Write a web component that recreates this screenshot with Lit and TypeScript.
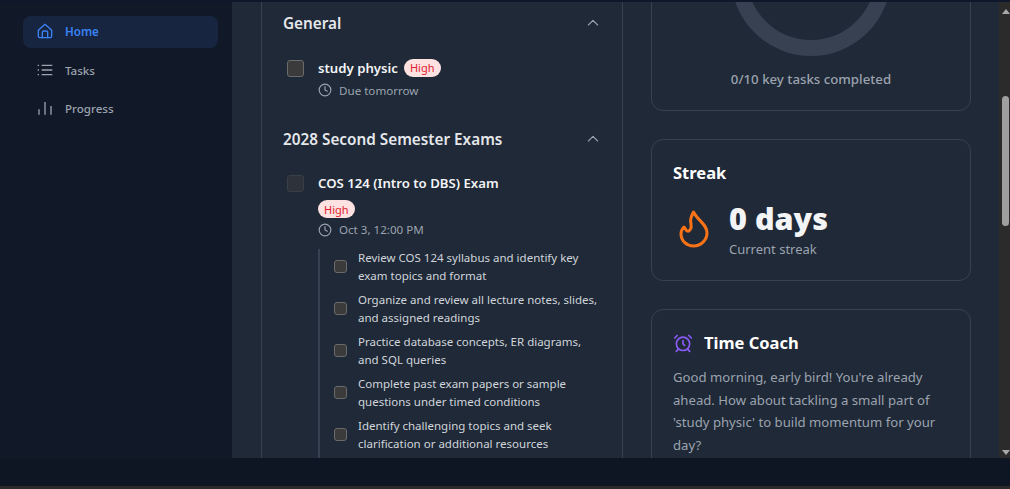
import { LitElement, html, css, svg } from "lit";
import { customElement } from "lit/decorators.js";

const clock = html`<svg class="clock" viewBox="0 0 24 24" fill="none" stroke="currentColor" stroke-width="2" stroke-linecap="round" stroke-linejoin="round"><circle cx="12" cy="12" r="10"/><path d="M12 6v6l4 2"/></svg>`;
const chevron = html`<svg class="chev" viewBox="0 0 24 24" fill="none" stroke="currentColor" stroke-width="1.6" stroke-linecap="round" stroke-linejoin="round"><path d="M5 15l7-7 7 7"/></svg>`;
const subtasks = [
  ["Review COS 124 syllabus and identify key", "exam topics and format"],
  ["Organize and review all lecture notes, slides,", "and assigned readings"],
  ["Practice database concepts, ER diagrams,", "and SQL queries"],
  ["Complete past exam papers or sample", "questions under timed conditions"],
  ["Identify challenging topics and seek", "clarification or additional resources"],
];

@customElement("app-root")
export class AppRoot extends LitElement {
  static styles = css`
    :host { display: flex; flex-direction: column; width: 1010px; height: 489px; overflow: hidden; background: #0f1623; font-family: "Noto Sans", "Open Sans", sans-serif; }
    * { box-sizing: border-box; }
    .topbar { height: 2px; background: #0f172a; flex: none; }
    .middle { display: flex; height: 456px; flex: none; }
    .footer { height: 28px; flex: none; background: #0f1623; }
    .rule { height: 3px; flex: none; background: #2b2b2b; }
    .sidebar { width: 232px; flex: none; background: #111827; padding: 14px 14px 0 23px; display: flex; flex-direction: column; gap: 6px; }
    .nav { height: 32px; display: flex; align-items: center; gap: 12px; padding-left: 14px; border-radius: 8px; font-size: 11.6px; font-weight: 500; color: #9ca3af; }
    .nav svg { width: 16px; height: 16px; flex: none; }
    .nav.active { background: #172540; color: #3b82f6; font-weight: 600; padding-bottom: 2px; }
    .main { width: 767px; flex: none; background: #1f2937; overflow: hidden; display: grid; grid-template-columns: 362px 320px; gap: 28px; padding-left: 29px; align-items: start; }
    .col { display: flex; flex-direction: column; }
    .tasks { height: 700px; margin-top: -20px; border: 1px solid #374151; padding: 28px 20px 0 21px; display: flex; flex-direction: column; }
    .group { display: flex; align-items: center; justify-content: space-between; height: 24px; color: #e5e7eb; font-size: 15.3px; font-weight: 600; padding-right: 1px; }
    .chev { width: 16px; height: 16px; color: #9ca3af; }
    .task { display: flex; gap: 14px; }
    .info { margin-top: -1px; }
    .check { width: 17px; height: 17px; flex: none; background: #3b3b3b; border: 1px solid #6b6b6b; border-radius: 3px; margin-left: 4px; }
    .check.dim { background: #2d323b; border-color: #3a3f47; }
    .title { display: flex; align-items: center; gap: 6px; color: #f3f4f6; font-size: 13.2px; font-weight: 600; line-height: 18px; }
    .badge { display: inline-flex; align-items: center; height: 18px; padding: 0 6px; border-radius: 9px; background: #fee2e2; color: #e11d2e; font-size: 11px; font-weight: 400; }
    .meta { display: flex; align-items: center; gap: 7px; color: #9ca3af; font-size: 11.6px; height: 18px; }
    .clock { width: 14px; height: 14px; }
    .first { margin-top: 25px; }
    .first .meta { margin-top: 4px; }
    .second-head { margin-top: 28px; }
    .second { margin-top: 24px; }
    .second .badge { margin-top: 8px; }
    .second .meta { margin-top: 2px; }
    .subs { margin: 10px 0 0 35px; border-left: 2px solid #374151; padding: 0 0 40px 14px; display: flex; flex-direction: column; gap: 6px; }
    .sub { display: flex; align-items: center; gap: 11px; color: #d1d5db; font-size: 11.5px; line-height: 18px; white-space: nowrap; }
    .sub .box { width: 13px; height: 13px; flex: none; background: #3b3b3b; border: 1px solid #6b6b6b; border-radius: 3px; }
    .card { border: 1px solid #374151; border-radius: 12px; padding: 21px; }
    .ringcard { margin-top: -40px; height: 149px; padding: 0; overflow: hidden; display: flex; flex-direction: column; align-items: center; }
    .ring { width: 160px; height: 160px; margin-top: -67px; flex: none; }
    .ringtext { margin-top: 14px; color: #9ca3af; font-size: 13.25px; font-weight: 500; }
    .streak { margin-top: 28px; height: 142px; }
    .h { color: #fff; font-size: 16.5px; font-weight: 700; line-height: 24px; }
    .streakrow { display: flex; align-items: center; gap: 19px; margin-top: 15px; }
    .flame { width: 32px; height: 40px; flex: none; margin-left: 5px; color: #f97316; }
    .days { color: #f3f4f6; font-size: 30.6px; font-weight: 900; line-height: 36px; }
    .sublabel { margin-top: 4px; color: #9ca3af; font-size: 13px; line-height: 18px; }
    .coach { margin-top: 28px; height: 300px; }
    .coachhead { display: flex; align-items: center; gap: 11px; }
    .alarm { width: 20px; height: 20px; color: #8b5cf6; }
    .coach p { margin: 11px 0 0; color: #9ca3af; font-size: 13.15px; line-height: 22.5px; }
    .scroll { width: 11px; flex: none; background: #2b2b2b; display: flex; flex-direction: column; align-items: center; position: relative; }
    .thumb { position: absolute; top: 94px; left: 3px; width: 7px; height: 130px; border-radius: 4px; background: #9f9f9f; }
    .arrow { position: absolute; left: 3px; width: 0; height: 0; border-left: 4px solid transparent; border-right: 4px solid transparent; }
    .up { top: 7px; border-bottom: 5px solid #a8a8a8; }
    .down { bottom: 3px; border-top: 5px solid #a8a8a8; }
  `;

  render() {
    return html`
      <div class="topbar"></div>
      <div class="middle">
        <aside class="sidebar">
          <div class="nav active">
            <svg viewBox="0 0 24 24" fill="none" stroke="currentColor" stroke-width="2" stroke-linejoin="round" stroke-linecap="round"><path d="M2 11 12 2l10 9v9a2 2 0 0 1-2 2H4a2 2 0 0 1-2-2z"/><path d="M8 22v-8a2 2 0 0 1 2-2h4a2 2 0 0 1 2 2v8"/></svg>
            Home
          </div>
          <div class="nav">
            <svg viewBox="0 0 24 24" fill="none" stroke="currentColor" stroke-width="2"><path d="M7 5h16M7 12h16M7 19h16M1 5h2M1 12h2M1 19h2"/></svg>
            Tasks
          </div>
          <div class="nav">
            <svg viewBox="0 0 24 24" fill="none" stroke="currentColor" stroke-width="2"><path d="M3 22v-8M12 22V3M21 22V9"/></svg>
            Progress
          </div>
        </aside>
        <main class="main">
          <section class="col tasks">
            <div class="group">General ${chevron}</div>
            <div class="task first">
              <div class="check"></div>
              <div class="info">
                <div class="title">study physic <span class="badge">High</span></div>
                <div class="meta">${clock} Due tomorrow</div>
              </div>
            </div>
            <div class="group second-head">2028 Second Semester Exams ${chevron}</div>
            <div class="task second">
              <div class="check dim"></div>
              <div class="info">
                <div class="title">COS 124 (Intro to DBS) Exam</div>
                <span class="badge">High</span>
                <div class="meta">${clock} Oct 3, 12:00 PM</div>
              </div>
            </div>
            <div class="subs">
              ${subtasks.map(
                (s) => html`<div class="sub"><div class="box"></div><div>${s[0]}<br />${s[1]}</div></div>`
              )}
            </div>
          </section>
          <section class="col">
            <div class="card ringcard">
              <svg class="ring" viewBox="0 0 160 160">${svg`<circle cx="80" cy="80" r="72" fill="none" stroke="#374151" stroke-width="16"/>`}</svg>
              <div class="ringtext">0/10 key tasks completed</div>
            </div>
            <div class="card streak">
              <div class="h">Streak</div>
              <div class="streakrow">
                <svg class="flame" viewBox="18 20 32 40" fill="none" stroke="currentColor" stroke-width="3" stroke-linecap="round" stroke-linejoin="round"><path d="M33.500 23C31 28 30 30 31 35C32 40 29 43 27 42C25.500 41 25 39 24 38C22 40 21 42 21 45C21 52 27 57 33.500 57C41 57 47 51 47 44C47 35 38 32 33.500 23Z"/></svg>
                <div>
                  <div class="days">0 days</div>
                  <div class="sublabel">Current streak</div>
                </div>
              </div>
            </div>
            <div class="card coach">
              <div class="coachhead">
                <svg class="alarm" viewBox="0 0 24 24" fill="none" stroke="currentColor" stroke-width="2" stroke-linecap="round" stroke-linejoin="round"><circle cx="12" cy="13" r="8"/><path d="M12 9v4l2 2M5 3 2 6M22 6l-3-3M6.400 19.400 4 22M17.600 19.400 20 22"/></svg>
                <div class="h">Time Coach</div>
              </div>
              <p>Good morning, early bird! You're already ahead. How about tackling a small part of 'study physic' to build momentum for your day?</p>
            </div>
          </section>
        </main>
        <div class="scroll">
          <div class="arrow up"></div>
          <div class="thumb"></div>
          <div class="arrow down"></div>
        </div>
      </div>
      <div class="footer"></div>
      <div class="rule"></div>
    `;
  }
}
